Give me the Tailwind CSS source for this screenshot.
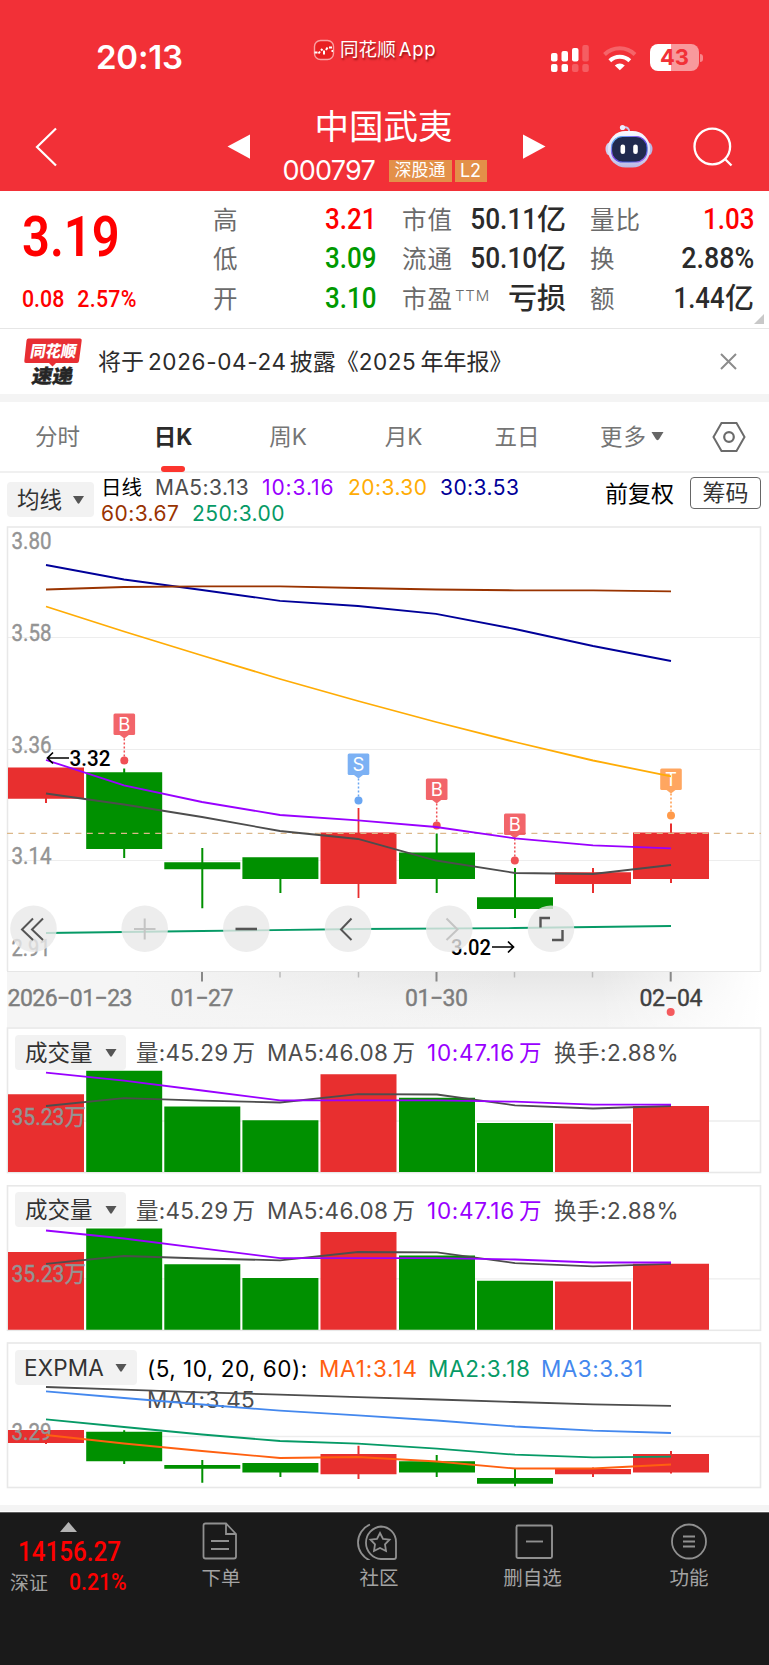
<!DOCTYPE html>
<html lang="zh-CN">
<head>
    <meta charset="UTF-8">
    <meta name="viewport" content="width=device-width, initial-scale=1.0">
    <title>中国武夷 000797</title>
    <script src="https://cdn.jsdelivr.net/npm/@tailwindcss/browser@4"></script>
</head>
<body class="w-[769px] h-[1665px] overflow-hidden bg-white font-['Inter','Noto_Sans_CJK_SC',sans-serif] whitespace-nowrap">
    <!-- Header -->
    <header class="h-[191px] bg-[#f23037] text-white">
        <div class="flex items-center h-[84px] pt-[31px]">
            <div class="ml-[96px] w-[217px] pt-[1px] text-[33px] font-semibold tracking-[-0.2px]">20:13</div>
            <div class="flex items-center w-[237px] -mt-[15px]">
                <svg class="w-[22px] h-[22px]" viewBox="0 0 22 22">
                    <rect x="1.5" y="1.5" width="19" height="19" rx="6" fill="#e81f22" stroke="#f9a0a2" stroke-width="1.4"/>
                    <path d="M1.500 13.500h3M5.500 14.500l1.500-2M8 10l1.500 1.500M11 11.500v4M13 11l1.500-2.500M16 8.500h3M18.500 12h1.500" stroke="#fff" stroke-width="2" fill="none"/>
                </svg>
                <span class="ml-[5px] text-[18.5px] tracking-[0.1px] [text-shadow:1px_2px_2px_rgba(90,0,0,.6)]">同花顺<span class="ml-[3px] tracking-[0.7px]">App</span></span>
            </div>
            <svg class="w-[40px] h-[28px]" viewBox="550 43 40 28" fill="#fff">
                <rect x="551" y="52" width="6.500" height="8.500" rx="2"/>
                <rect x="561.5" y="50" width="6.500" height="10.500" rx="2"/>
                <rect x="572" y="47" width="6.500" height="13.500" rx="2"/>
                <rect x="582.3" y="44" width="6.500" height="16.500" rx="2" opacity=".22"/>
                <rect x="551" y="63" width="6.500" height="8" rx="2"/>
                <rect x="561.5" y="63" width="6.500" height="8" rx="2"/>
                <rect x="572" y="63" width="6.500" height="8" rx="2" opacity=".22"/>
                <rect x="582.3" y="63" width="6.500" height="8" rx="2" opacity=".22"/>
            </svg>
            <svg class="ml-[12px] w-[36px] h-[28px]" viewBox="602 43 36 28" fill="none" stroke="#fff" stroke-width="4">
                <path d="M604.500 53.500a22 22 0 0 1 30.500 0" opacity=".25"/>
                <path d="M609.800 59.800a14.500 14.500 0 0 1 20 0"/>
                <path d="M614.800 64.500a7.500 7.500 0 0 1 10 0l-5 4.800z" fill="#fff" stroke="none"/>
            </svg>
            <div class="relative ml-[12px] w-[49px] h-[27px] rounded-[8px] bg-linear-to-r from-white from-43% to-[#f8999c] to-43% text-center text-[22px] leading-[27px] font-bold text-[#f23037]">43
                <span class="absolute -right-[4px] top-[10px] w-[3px] h-[8px] rounded-r-full bg-[#f8868a]"></span>
            </div>
        </div>
        <div class="flex items-center h-[107px]">
            <svg class="ml-[34px] w-[24px] h-[42px] mt-[18px]" viewBox="34 126 24 42" fill="none" stroke="#fff" stroke-width="2.200"><path d="M56 128.500L37 147L56 165.500"/></svg>
            <svg class="ml-[168px] mt-[18px] w-[26px] h-[26px]" viewBox="226 134 26 26" fill="#fff"><path d="M227.500 146.500L250 134.500V158.800z"/></svg>
            <div class="ml-[25px] w-[215px] self-start pt-[22px] flex flex-col items-center">
                <div class="-ml-[2px] text-[34.5px] leading-[42px] font-normal">中国武夷</div>
                <div class="flex items-center mt-[9px] h-[28px]">
                    <span class="text-[27px] tracking-[-0.75px] w-[99px]">000797</span>
                    <span class="ml-[7px] w-[63px] h-[22px] leading-[21px] text-center text-[17px] bg-[#e39049]">深股通</span>
                    <span class="ml-[3px] w-[32px] h-[22px] leading-[22px] text-center text-[18px] bg-[#e39049]">L2</span>
                </div>
            </div>
            <svg class="ml-[30px] mt-[18px] w-[26px] h-[26px]" viewBox="522 134 26 26" fill="#fff"><path d="M545.500 146.500L523 134.500V158.800z"/></svg>
            <svg class="ml-[56px] mt-[16px] w-[52px] h-[46px]" viewBox="604 123 52 46">
                <defs>
                    <linearGradient id="shell" x1="0" y1="0" x2="0" y2="1"><stop offset="0" stop-color="#fafaff"/><stop offset=".65" stop-color="#dcdcf5"/><stop offset="1" stop-color="#b9b8e3"/></linearGradient>
                    <linearGradient id="visor" x1="0" y1="0" x2="1" y2="1"><stop offset="0" stop-color="#55d8ff"/><stop offset=".4" stop-color="#8a4df0"/><stop offset=".75" stop-color="#3355d8"/><stop offset="1" stop-color="#d970f5"/></linearGradient>
                </defs>
                <path d="M623 127.500q6-1.500 6.500 5" fill="none" stroke="#c9c9ee" stroke-width="2"/>
                <circle cx="622.500" cy="127.500" r="2.600" fill="#ececff"/>
                <ellipse cx="609.500" cy="149" rx="4" ry="6.500" fill="#cfd0f0"/>
                <ellipse cx="648.500" cy="149" rx="4" ry="6.500" fill="#b9b9e5"/>
                <rect x="608" y="131" width="42" height="36.500" rx="17.500" fill="url(#shell)"/>
                <rect x="611.500" y="136.500" width="35.500" height="25.500" rx="11" fill="#202a4e" stroke="url(#visor)" stroke-width="1.200"/>
                <rect x="620.500" y="144.500" width="4.600" height="9.600" rx="2.300" fill="#fff"/>
                <rect x="633.200" y="144.500" width="4.600" height="9.600" rx="2.300" fill="#fff"/>
            </svg>
            <svg class="ml-[36px] mt-[18px] w-[42px] h-[42px]" viewBox="692 126 42 42" fill="none" stroke="#fff" stroke-width="2.300"><circle cx="712.300" cy="146.500" r="17.800"/><path d="M724.500 158.500l7 7"/></svg>
        </div>
    </header>

    <!-- Quote -->
    <section class="relative flex h-[138px] pt-[9px] border-b border-[#e6e6e6] text-[#2b2b2b]">
        <div class="w-[213px] pl-[22px] text-[#ff0000] font-['Roboto'] font-medium">
            <div class="h-[74px] leading-[75px] text-[55.5px] font-semibold scale-x-88 origin-left">3.19</div>
            <div class="h-[36px] mt-[7px] leading-[36px] text-[24.5px] scale-x-87 origin-left">0.08<span class="ml-[15px] tracking-[0.3px]">2.57%</span></div>
        </div>
        <div class="w-[163px] text-[24.5px] leading-[39.4px]">
            <div class="flex justify-between h-[39.4px]"><span class="text-[#6b6b6b] pt-[1px]">高</span><span class="font-['Roboto'] font-medium text-[29.5px] scale-x-88 origin-right text-[#ff0000]">3.21</span></div>
            <div class="flex justify-between h-[39.4px]"><span class="text-[#6b6b6b] pt-[1px]">低</span><span class="font-['Roboto'] font-medium text-[29.5px] scale-x-88 origin-right text-[#009900]">3.09</span></div>
            <div class="flex justify-between h-[39.4px]"><span class="text-[#6b6b6b] pt-[1px]">开</span><span class="font-['Roboto'] font-medium text-[29.5px] scale-x-88 origin-right text-[#009900]">3.10</span></div>
        </div>
        <div class="ml-[26px] w-[164px] text-[24.5px] leading-[39.4px]">
            <div class="flex justify-between h-[39.4px]"><span class="text-[#6b6b6b] pt-[1px] tracking-[1px]">市值</span><span class="flex"><span class="font-['Roboto'] font-medium text-[29.5px] scale-x-89 origin-right">50.11</span><span class="text-[29px] font-medium">亿</span></span></div>
            <div class="flex justify-between h-[39.4px]"><span class="text-[#6b6b6b] pt-[1px] tracking-[1px]">流通</span><span class="flex"><span class="font-['Roboto'] font-medium text-[29.5px] scale-x-89 origin-right">50.10</span><span class="text-[29px] font-medium">亿</span></span></div>
            <div class="flex justify-between h-[39.4px]"><span class="flex text-[#6b6b6b] pt-[1px] tracking-[1px]">市盈<span class="ml-[2px] -mt-[4px] text-[15px] font-light tracking-[0.8px]">TTM</span></span><span class="text-[29px] font-medium">亏损</span></div>
        </div>
        <div class="ml-[24px] w-[164px] text-[24.5px] leading-[39.4px]">
            <div class="flex justify-between h-[39.4px]"><span class="text-[#6b6b6b] pt-[1px] tracking-[1px]">量比</span><span class="font-['Roboto'] font-medium text-[29.5px] scale-x-88 origin-right text-[#ff0000]">1.03</span></div>
            <div class="flex justify-between h-[39.4px]"><span class="text-[#6b6b6b] pt-[1px]">换</span><span class="font-['Roboto'] font-medium text-[29.5px] scale-x-91 origin-right">2.88%</span></div>
            <div class="flex justify-between h-[39.4px]"><span class="text-[#6b6b6b] pt-[1px]">额</span><span class="flex"><span class="font-['Roboto'] font-medium text-[29.5px] scale-x-87 origin-right">1.44</span><span class="text-[29px] font-medium">亿</span></span></div>
        </div>
        <svg class="absolute right-[5px] bottom-[4px] w-[10px] h-[10px]" viewBox="0 0 10 10"><path d="M10 0V10H0z" fill="#c8c8c8"/></svg>
    </section>

    <!-- News -->
    <section class="flex items-center h-[65px] pl-[23px] text-[#2b2b2b]">
        <svg class="w-[59px] h-[50px] overflow-visible" viewBox="0 -1 59 50">
            <path d="M5.500 0.500H57Q59 0.500 58.700 2.500L56 23Q55.700 25 54 25H33L29.500 28.500L26 25H3Q1 25 1.300 23L3.500 2.500Q3.700 0.500 5.500 0.500z" fill="#e82e33"/>
            <g font-family="'Noto Sans CJK SC', sans-serif" font-weight="900">
                <text transform="translate(6.500 19) skewX(-10)" font-size="16" fill="#fff" textLength="46" lengthAdjust="spacingAndGlyphs">同花顺</text>
                <text transform="translate(8 45) skewX(-10)" font-size="19" fill="#262626" stroke="#262626" stroke-width=".4" textLength="41" lengthAdjust="spacingAndGlyphs">速递</text>
            </g>
        </svg>
        <div class="ml-[16px] flex-1 text-[23px] pt-[1px]">将于<span class="ml-[4px] mr-[3px] tracking-[0.65px] text-[22.500px]">2026-04-24</span>披露《<span class="mr-[4px] text-[22.500px] tracking-[0.6px]">2025</span>年年报》</div>
        <svg class="mr-[32px] w-[17px] h-[17px]" viewBox="0 0 17 17" stroke="#8c8c8c" stroke-width="2"><path d="M1 1L16 16M16 1L1 16"/></svg>
    </section>
    <div class="h-[8px] bg-[#f4f4f4]"></div>

    <!-- Period tabs -->
    <nav class="flex items-center h-[71px] border-b-2 border-[#f0f0f0] text-[22.5px] text-[#757575]">
        <div class="w-[115px] text-center">分时</div>
        <div class="relative w-[116px] h-full leading-[70px] text-center font-bold text-[#2b2b2b]">日K<span class="absolute left-[46px] -bottom-[1px] w-[24px] h-[6px] rounded-full bg-[#fc352e]"></span></div>
        <div class="w-[114px] text-center">周K</div>
        <div class="w-[117px] text-center">月K</div>
        <div class="w-[110px] text-center">五日</div>
        <div class="flex items-center ml-[28px] w-[112px] tracking-[1px]">更多
            <svg class="ml-[4px] w-[13px] h-[9px]" viewBox="0 0 13 9"><path d="M0.500 0H12.500L8.500 6.500Q6.500 10 4.500 6.500z" fill="#666"/></svg>
        </div>
        <svg class="w-[34px] h-[32px]" viewBox="0 0 34 32" fill="none" stroke="#6b6b6b" stroke-width="2"><path d="M9.500 2H24.500L32.500 16L24.500 30H9.500L1.500 16z"/><circle cx="17" cy="16" r="4.800" stroke-width="2.200"/></svg>
    </nav>

    <!-- Moving averages -->
    <section class="flex h-[53px] pl-[7px]">
        <div class="flex items-center w-[87px] h-[35px] mt-[9px] pl-[10px] rounded-[4px] bg-[#f2f2f2] text-[22.5px] text-[#333]"><span class="pt-[1px]">均线</span>
            <svg class="ml-[11px] w-[11px] h-[8px]" viewBox="0 0 11 8"><path d="M0 0H11L6.500 7Q5.500 8.500 4.500 7z" fill="#555"/></svg>
        </div>
        <div class="ml-[7px] mt-[2px] w-[504px] text-[21px] leading-[25.500px] tracking-[0.45px]">
            <div class="flex"><span class="w-[54px] text-[20.500px] tracking-normal text-black">日线</span><span class="w-[107px] text-[#4d4d4d]">MA5:3.13</span><span class="w-[86px] tracking-[0.9px] text-[#9900ff]">10:3.16</span><span class="w-[92px] text-[#ffac05]">20:3.30</span><span class="text-[#000099]">30:3.53</span></div>
            <div class="flex"><span class="w-[91px] text-[#993300]">60:3.67</span><span class="text-[#069a66]">250:3.00</span></div>
        </div>
        <div class="mt-[2px] leading-[38px] text-[23px] text-black">前复权</div>
        <div class="ml-[16px] mt-[4px] w-[71px] h-[32px] rounded-[4px] border border-[#666] text-center text-[23px] leading-[30px] text-[#333]">筹码</div>
    </section>

    <!-- Daily candles -->
    <svg class="block w-[769px] h-[445px]" viewBox="0 526 769 445">
        <defs>
            <g id="tagShape">
                <rect x="-10.800" y="0" width="21.600" height="21.600" rx="1.500" opacity=".88"/>
                <path d="M-4.500 21.600H4.500L0 25z" opacity=".88"/>
                <path d="M0 25V45" stroke-width="1.500" stroke-dasharray="2 2"/>
                <circle cy="47" r="4"/>
            </g>
        </defs>
        <g fill="none" stroke="#e8e8e8" stroke-width="1.500">
            <path d="M8 637.500H761M8 749.500H761M8 860.500H761" stroke="#ededed" stroke-width="1.200"/>
            <path d="M7.500 971V527H760.500V971"/>
        </g>
        <g fill="#949494" stroke="#949494" stroke-width=".4" font-family="Roboto" font-size="23">
            <text x="11.500" y="549.300" textLength="40" lengthAdjust="spacingAndGlyphs">3.80</text>
            <text x="11.500" y="641" textLength="40" lengthAdjust="spacingAndGlyphs">3.58</text>
            <text x="11.500" y="752.500" textLength="40" lengthAdjust="spacingAndGlyphs">3.36</text>
            <text x="11.500" y="864" textLength="40" lengthAdjust="spacingAndGlyphs">3.14</text>
            <text x="11.500" y="955.700" textLength="39" lengthAdjust="spacingAndGlyphs">2.91</text>
        </g>
        <g fill="#e82f2f">
            <path d="M8 767.500h76v31.200h-76zM45 798h2v5h-2z"/>
            <path d="M320.500 832.500h76v51.500h-76zM357.600 808h1.800v90h-1.800z"/>
            <path d="M555 872.300h76v11.700h-76zM592 868h2v25h-2z"/>
            <path d="M633 832.500h76v46.500h-76zM670 823.500h2v59.500h-2z"/>
        </g>
        <g fill="#009000">
            <path d="M86.200 772.300h76v76.700h-76zM123.200 768.500h2v89.500h-2z"/>
            <path d="M164.300 862.300h76v6.900h-76zM201.300 848h2v60.300h-2z"/>
            <path d="M242.400 857.300h76v21.700h-76zM279.400 879h2v14h-2z"/>
            <path d="M399 852.500h76v26.500h-76zM435.700 833.500h2v59.500h-2z"/>
            <path d="M477 897.300h76v11.700h-76zM514 868h2v50h-2z"/>
        </g>
        <path d="M7 833.300H761" fill="none" stroke="#dcb88a" stroke-width="1.300" stroke-dasharray="6 5.400"/>
        <g fill="#f05055" stroke="#f05055">
            <use href="#tagShape" x="124.300" y="713.500" stroke-width="0"/>
            <use href="#tagShape" x="436.700" y="778.500" stroke-width="0"/>
            <use href="#tagShape" x="514.800" y="813.500" stroke-width="0"/>
        </g>
        <use href="#tagShape" x="358.500" y="753.500" fill="#6aa6f2" stroke="#6aa6f2" stroke-width="0"/>
        <use href="#tagShape" x="671" y="768.500" fill="#ff9a4a" stroke="#ff9a4a" stroke-width="0"/>
        <g fill="#fff" font-family="Inter" font-size="18.500" text-anchor="middle">
            <text x="124.300" y="731">B</text>
            <text x="358.500" y="771">S</text>
            <text x="436.700" y="796">B</text>
            <text x="514.800" y="831">B</text>
            <text x="671" y="786">T</text>
        </g>
        <g fill="none" stroke-width="1.800">
            <path d="M46 933L202 931L358 929L515 928L671 926" stroke="#069a66"/>
            <path d="M46 793.500L124 804.500L202 817L280 831L358 839L436 860.500L515 873L593 874L671 865" stroke="#4d4d4d"/>
            <path d="M46 760L124 785.300L202 802L280 815L358 820.300L436 827L515 838.300L593 845.300L671 848.300" stroke="#9900ff"/>
            <path d="M46 606.500L124 631.500L202 655.500L280 679L358 701L436 722L515 742L593 760.500L671 776.300" stroke="#ffac05"/>
            <path d="M46 565L124 579.500L202 590L280 600.800L358 606L436 613.800L515 629L593 646L671 661" stroke="#000099"/>
            <path d="M46 589.500L124 587L202 586.300L280 586.300L358 588L436 589.500L515 590.300L593 590.300L671 591.300" stroke="#993300"/>
            <path d="M69 758H47.500M53 752.500L47.500 758L53 763.500M492 947H513.500M508 941.500L513.500 947L508 952.500" stroke="#000" stroke-width="1.700"/>
        </g>
        <g font-family="Roboto" font-size="22.500" font-weight="500">
            <text x="69.500" y="766" textLength="41" lengthAdjust="spacingAndGlyphs">3.32</text>
            <text x="451" y="955.300" textLength="40" lengthAdjust="spacingAndGlyphs">3.02</text>
        </g>
        <!-- Zoom and pan controls -->
        <g fill="#e8e8e8" fill-opacity=".8">
            <circle cx="33.500" cy="928.700" r="23.300"/>
            <circle cx="144.700" cy="928.700" r="23.300"/>
            <circle cx="246.300" cy="928.700" r="23.300"/>
            <circle cx="348" cy="928.700" r="23.300"/>
            <circle cx="449.300" cy="928.700" r="23.300"/>
            <circle cx="551" cy="928.700" r="23.300"/>
        </g>
        <g fill="none" stroke="#555" stroke-width="2">
            <path d="M33 918.500L22 929.500L33 940M43 918.500L32 929.500L43 940"/>
            <path d="M134 929H155.500M144.700 918.500V939.500" stroke="#c4c4c4"/>
            <path d="M235.500 929H257" stroke-width="2.600"/>
            <path d="M351.500 918.500L341 929.500L351.500 940"/>
            <path d="M446.500 918.500L457.500 929.500L446.500 940" stroke="#c4c4c4"/>
            <path d="M540.500 927.500V918H550M562.500 930V940H552" stroke-width="2.400"/>
        </g>
    </svg>

    <!-- Date axis -->
    <svg class="block w-[769px] h-[56px]" viewBox="0 971 769 56">
        <defs>
            <linearGradient id="axisDown" x1="0" y1="0" x2="0" y2="1"><stop offset="0" stop-color="#e6e6e6"/><stop offset=".6" stop-color="#f1f1f1"/><stop offset="1" stop-color="#f5f5f5"/></linearGradient>
            <linearGradient id="axisLeft"><stop offset="0" stop-color="#f5f5f5"/><stop offset=".25" stop-color="#f5f5f5"/><stop offset="1" stop-color="#f5f5f5" stop-opacity="0"/></linearGradient>
            <linearGradient id="axisRight"><stop offset="0" stop-color="#fff" stop-opacity="0"/><stop offset="1" stop-color="#fff"/></linearGradient>
        </defs>
        <rect x="7" y="971" width="755" height="56" fill="url(#axisDown)"/>
        <rect x="7" y="971" width="500" height="56" fill="url(#axisLeft)"/>
        <rect x="600" y="971" width="162" height="56" fill="url(#axisRight)"/>
        <path d="M7 971.500H761" stroke="#e6e6e6"/>
        <path d="M202 972V981.500M436.500 972V981.500M670.700 972V981.500" stroke="#888" stroke-width="2"/>
        <path d="M280 972V977.500M358.500 972V977.500M514.500 972V977.500M592.500 972V977.500" stroke="#bbb" stroke-width="1.500"/>
        <g fill="#7d7d7d" stroke="#7d7d7d" stroke-width=".4" font-family="Roboto" font-size="23">
            <text x="7.500" y="1006" textLength="125" lengthAdjust="spacing">2026−01−23</text>
            <text x="170.500" y="1006" textLength="63" lengthAdjust="spacing">01−27</text>
            <text x="405" y="1006" textLength="63" lengthAdjust="spacing">01−30</text>
            <text x="639.500" y="1006" textLength="63" lengthAdjust="spacing" fill="#404040" stroke="#404040">02−04</text>
        </g>
        <circle cx="670.700" cy="1012" r="4" fill="#f45b5e"/>
    </svg>

    <!-- Volume 1 -->
    <section class="relative h-[158px]">
        <svg class="block w-[769px] h-[158px]" viewBox="0 1027 769 158">
            <g id="volume">
                <path d="M8 1121H761" stroke="#ededed" stroke-width="1.300"/>
                <rect x="7.500" y="1028" width="753" height="144.500" fill="none" stroke="#e8e8e8" stroke-width="1.600"/>
                <path d="M8 1094.300h76V1172h-76zM320.500 1074.300h76V1172h-76zM555 1123.700h76V1172h-76zM633 1106h76V1172h-76z" fill="#e82f2f"/>
                <path d="M86.200 1070.700h76V1172h-76zM164.300 1106.500h76V1172h-76zM242.400 1120.300h76V1172h-76zM399 1097.700h76V1172h-76zM477 1123h76V1172h-76z" fill="#009000"/>
                <text x="11.500" y="1124.700" fill="#949494" stroke="#949494" stroke-width=".4" font-family="Roboto, 'Noto Sans CJK SC', sans-serif" font-size="23" textLength="74" lengthAdjust="spacingAndGlyphs">35.23万</text>
                <g fill="none" stroke-width="1.800">
                    <path d="M46 1106L124 1098.200L202 1100.700L280 1102.500L358 1094.200L437 1094.500L515 1105.300L593 1108.500L671 1106" stroke="#4d4d4d"/>
                    <path d="M46 1072.700L124 1080.700L202 1090.500L280 1100.300L437 1100.300L515 1101.700L593 1104.700L671 1104.700" stroke="#9900ff"/>
                </g>
            </g>
        </svg>
        <div class="absolute left-[15px] top-[8px] flex items-center h-[35px] text-[22.5px] text-[#4d4d4d]">
            <div class="flex items-center w-[111px] h-[35px] pl-[10px] rounded-[4px] bg-[#f2f2f2] text-[#333]">成交量
                <svg class="ml-[12px] w-[12px] h-[8px]" viewBox="0 0 11 8"><path d="M0 0H11L6.500 7Q5.500 8.500 4.500 7z" fill="#555"/></svg>
            </div>
            <span class="ml-[10px] w-[131px] pt-[1px] tracking-[0.25px]">量:45.29<span class="ml-[4px]">万</span></span>
            <span class="w-[160px] pt-[1px] tracking-[0.4px]">MA5:46.08<span class="ml-[4px]">万</span></span>
            <span class="w-[127px] pt-[1px] tracking-[0.75px] text-[#9900ff]">10:47.16<span class="ml-[4px]">万</span></span>
            <span class="pt-[1px] tracking-[0.5px]">换手:2.88%</span>
        </div>
    </section>

    <!-- Volume 2 -->
    <section class="relative h-[157px]">
        <svg class="block w-[769px] h-[157px]" viewBox="0 1027.200 769 157"><use href="#volume"/></svg>
        <div class="absolute left-[15px] top-[7px] flex items-center h-[35px] text-[22.5px] text-[#4d4d4d]">
            <div class="flex items-center w-[111px] h-[35px] pl-[10px] rounded-[4px] bg-[#f2f2f2] text-[#333]">成交量
                <svg class="ml-[12px] w-[12px] h-[8px]" viewBox="0 0 11 8"><path d="M0 0H11L6.500 7Q5.500 8.500 4.500 7z" fill="#555"/></svg>
            </div>
            <span class="ml-[10px] w-[131px] pt-[2px] tracking-[0.25px]">量:45.29<span class="ml-[4px]">万</span></span>
            <span class="w-[160px] pt-[2px] tracking-[0.4px]">MA5:46.08<span class="ml-[4px]">万</span></span>
            <span class="w-[127px] pt-[2px] tracking-[0.75px] text-[#9900ff]">10:47.16<span class="ml-[4px]">万</span></span>
            <span class="pt-[2px] tracking-[0.5px]">换手:2.88%</span>
        </div>
    </section>

    <!-- EXPMA -->
    <section class="relative h-[163px]">
        <div class="absolute left-[15px] top-[8px] text-[22.5px]">
            <div class="flex items-center h-[35px]">
                <div class="flex items-center w-[122px] h-[35px] pl-[9px] rounded-[4px] bg-[#f2f2f2] text-[#333]"><span class="w-[80px] tracking-[0.2px]">EXPMA</span>
                    <svg class="ml-[11px] w-[12px] h-[8px]" viewBox="0 0 11 8"><path d="M0 0H11L6.500 7Q5.500 8.500 4.500 7z" fill="#555"/></svg>
                </div>
                <span class="ml-[10px] w-[172px] mt-[3px] tracking-[0.5px] text-black">(5, 10, 20, 60):</span>
                <span class="w-[109px] mt-[3px] tracking-[0.8px] text-[#ff6010]">MA1:3.14</span>
                <span class="w-[113px] mt-[3px] tracking-[0.7px] text-[#069a66]">MA2:3.18</span>
                <span class="mt-[3px] tracking-[0.5px] text-[#4488ee]">MA3:3.31</span>
            </div>
            <div class="ml-[132px] mt-[-1px] leading-[32px] tracking-[0.4px] text-[#4d4d4d]">MA4:3.45</div>
        </div>
        <svg class="relative block w-[769px] h-[163px]" viewBox="0 1342 769 163">
            <path d="M8 1436.500H761" stroke="#ededed" stroke-width="1.300"/>
            <rect x="7.500" y="1343" width="753" height="144.500" fill="none" stroke="#e8e8e8" stroke-width="1.600"/>
            <g fill="#e82f2f">
                <path d="M8 1430h76v13h-76zM45 1442h2v2h-2z"/>
                <path d="M320.500 1454h76v20.300h-76zM357.500 1445.700h2v33.300h-2z"/>
                <path d="M555 1469h76v5.300h-76zM592 1467.500h2v9.500h-2z"/>
                <path d="M633 1454h76v18.500h-76zM670 1451h2v22.500h-2z"/>
            </g>
            <g fill="#009000">
                <path d="M86.200 1431.700h76v29.500h-76zM123.200 1430.300h2v33.700h-2z"/>
                <path d="M164.300 1465h76v3.800h-76zM201.300 1460h2v22.700h-2z"/>
                <path d="M242.400 1463h76v9.500h-76zM279.400 1472h2v5h-2z"/>
                <path d="M399 1461.300h76v11.200h-76zM435.700 1455h2v22h-2z"/>
                <path d="M477 1478h76v5.700h-76zM514 1469h2v17.300h-2z"/>
            </g>
            <text x="11.500" y="1440" fill="#949494" stroke="#949494" stroke-width=".4" font-family="Roboto" font-size="23" textLength="40" lengthAdjust="spacingAndGlyphs">3.29</text>
            <g fill="none" stroke-width="1.800">
                <path d="M46 1387L124 1389.700L202 1392.300L280 1394.700L358 1397.200L437 1399.500L515 1402L593 1404.300L671 1405.800" stroke="#4d4d4d"/>
                <path d="M46 1391.300L124 1398L202 1404.500L280 1410.700L358 1415.300L437 1420.500L515 1426.500L593 1430.700L671 1433" stroke="#4488ee"/>
                <path d="M46 1419.300L124 1427L202 1434.500L280 1441L358 1443.700L437 1448.700L515 1454.700L593 1457.300L671 1456.700" stroke="#069a66"/>
                <path d="M46 1435L124 1443.500L202 1451L280 1458L358 1457L437 1461.500L515 1468.500L593 1468.500L671 1464.500" stroke="#ff6010"/>
            </g>
        </svg>
    </section>
    <div class="h-[6px] mb-[1px] bg-[#f4f4f4]"></div>

    <!-- Bottom bar -->
    <footer class="flex h-[153px] border-t border-[#606060] bg-[#1a1a1a] text-[19.5px] leading-[28px] text-[#a3a3a3]">
        <div class="w-[139px] pt-[9px] font-['Roboto'] font-medium text-[#ff0000]">
            <svg class="ml-[60px] w-[17px] h-[10px]" viewBox="0 0 17 10"><path d="M8.500 0L17 10H0z" fill="#b3b3b3"/></svg>
            <div class="ml-[18px] mt-[4px] leading-[32px] text-[27.5px] scale-x-88 origin-left">14156.27</div>
            <div class="flex ml-[10px]"><span class="w-[59px] text-[19px] font-normal text-[#a3a3a3] font-['Noto_Sans_CJK_SC']">深证</span><span class="text-[23.5px] scale-x-90 origin-left">0.21%</span></div>
        </div>
        <div class="flex flex-col items-center w-[162px] pt-[9px]">
            <svg class="w-[36px] h-[38px]" viewBox="0 0 36 38" fill="none" stroke="#909090" stroke-width="1.800"><path d="M3.500 1.500H24L34 12V34.500Q34 36.500 32 36.500H3.500Q1.500 36.500 1.500 34.500V3.500Q1.500 1.500 3.500 1.500zM24 1.500V12H34M9 19H27M9 27H27"/></svg>
            <span class="mt-[4px] ml-[2px]">下单</span>
        </div>
        <div class="flex flex-col items-center w-[154px] pt-[9px]">
            <svg class="w-[42px] h-[38px]" viewBox="357 1521 42 38" fill="none" stroke="#909090" stroke-width="1.800">
                <path d="M381 1525.500A16.300 16.300 0 0 0 381 1558H394Q396 1558 396 1556V1541A15.500 15.500 0 0 0 381 1525.500zM370 1523.500A19.500 19.500 0 0 0 370 1559.500"/>
                <path d="M380 1532L383 1538L389.500 1538.700L385 1543.300L386 1550L380 1547L374 1550L375 1543.300L370.500 1538.700L377 1538z"/>
            </svg>
            <span class="mt-[4px] ml-[2px]">社区</span>
        </div>
        <div class="flex flex-col items-center w-[158px] pt-[9px]">
            <svg class="w-[38px] h-[38px]" viewBox="0 0 38 38" fill="none" stroke="#909090" stroke-width="1.900"><rect x="1.500" y="3.500" width="35.500" height="32.500" rx="1.500"/><path d="M11 19.500H28"/></svg>
            <span class="mt-[4px] -ml-[3px]">删自选</span>
        </div>
        <div class="flex flex-col items-center w-[152px] pt-[9px]">
            <svg class="w-[38px] h-[38px]" viewBox="0 0 38 38" fill="none" stroke="#909090" stroke-width="1.800"><circle cx="19" cy="19.500" r="17"/><path d="M13 14.500H25M13 19.500H25M13 24.500H25"/></svg>
            <span class="mt-[4px]">功能</span>
        </div>
    </footer>
</body>
</html>
